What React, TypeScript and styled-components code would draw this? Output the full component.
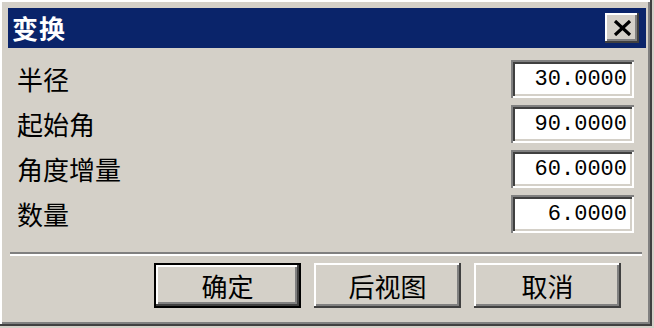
import React from "react";
import styled, { createGlobalStyle } from "styled-components";

const Global = createGlobalStyle`
  html, body { margin: 0; padding: 0; background: #d4d0c8; }
  body { font-family: "Noto Sans CJK SC", "Noto Sans", sans-serif; }
`;

const Window = styled.div`
  box-sizing: border-box;
  width: 652px;
  height: 326px;
  background: #d4d0c8;
  padding: 8px 6px 6px 8px;
  box-shadow: inset -2px -2px #404040, inset 2px 2px #ffffff,
    inset -4px -4px #808080, inset 4px 4px #d4d0c8;
  display: flex;
  flex-direction: column;
`;

const TitleBar = styled.div`
  height: 40px;
  background: #0a246a;
  display: flex;
  align-items: center;
  justify-content: space-between;
  padding: 0 7px 0 4px;
`;

const Title = styled.span`
  color: #ffffff;
  font-weight: 700;
  font-size: 26px;
  line-height: 1;
  letter-spacing: 1px;
`;

const RaisedButton = styled.button<{ $default?: boolean }>`
  box-sizing: border-box;
  margin: 0;
  padding: 0;
  border: none;
  background: #d4d0c8;
  font-family: "Noto Sans CJK SC", sans-serif;
  color: #000;
  display: flex;
  align-items: center;
  justify-content: center;
  box-shadow: ${(p) =>
    p.$default
      ? "inset -2px -2px #000, inset 2px 2px #000, inset -4px -4px #404040, inset 4px 4px #ffffff, inset -6px -6px #808080"
      : "inset -2px -2px #404040, inset 2px 2px #ffffff, inset -4px -4px #808080, inset 4px 4px #d4d0c8"};
`;

const CloseButton = styled(RaisedButton)`
  width: 34px;
  height: 30px;
`;

const Form = styled.div`
  display: flex;
  flex-direction: column;
  gap: 7px;
  padding: 12px 12px 0 9px;
`;

const Row = styled.div`
  display: flex;
  align-items: center;
  justify-content: space-between;
  height: 38px;
`;

const Label = styled.span`
  font-size: 26px;
  line-height: 1;
  color: #000;
`;

const Field = styled.div`
  box-sizing: border-box;
  width: 123px;
  height: 38px;
  background: #ffffff;
  padding: 0 7px 0 4px;
  display: flex;
  align-items: center;
  justify-content: flex-end;
  font-family: "Liberation Mono", "DejaVu Sans Mono", monospace;
  font-size: 22px;
  color: #000;
  box-shadow: inset 2px 2px #808080, inset -2px -2px #ffffff,
    inset 4px 4px #404040, inset -4px -4px #d4d0c8;
`;

const Separator = styled.div`
  margin: 19px 4px 0 2px;
  height: 2px;
  background: #808080;
  border-bottom: 2px solid #ffffff;
`;

const ButtonRow = styled.div`
  display: flex;
  justify-content: flex-end;
  gap: 13px;
  padding: 7px 25px 0 0;
`;

const ActionButton = styled(RaisedButton)`
  width: 147px;
  height: 45px;
  font-size: 26px;
  line-height: 1;
`;

const rows: [string, string][] = [
  ["半径", "30.0000"],
  ["起始角", "90.0000"],
  ["角度增量", "60.0000"],
  ["数量", "6.0000"],
];

export default function App() {
  return (
    <>
      <Global />
      <Window>
        <TitleBar>
          <Title>变换</Title>
          <CloseButton aria-label="关闭">
            <svg width="19" height="16" viewBox="0 0 19 16">
              <path d="M2 1 L17 15 M17 1 L2 15" stroke="#000" strokeWidth="3.2" />
            </svg>
          </CloseButton>
        </TitleBar>
        <Form>
          {rows.map(([label, value]) => (
            <Row key={label}>
              <Label>{label}</Label>
              <Field>{value}</Field>
            </Row>
          ))}
        </Form>
        <Separator />
        <ButtonRow>
          <ActionButton $default>确定</ActionButton>
          <ActionButton>后视图</ActionButton>
          <ActionButton>取消</ActionButton>
        </ButtonRow>
      </Window>
    </>
  );
}
